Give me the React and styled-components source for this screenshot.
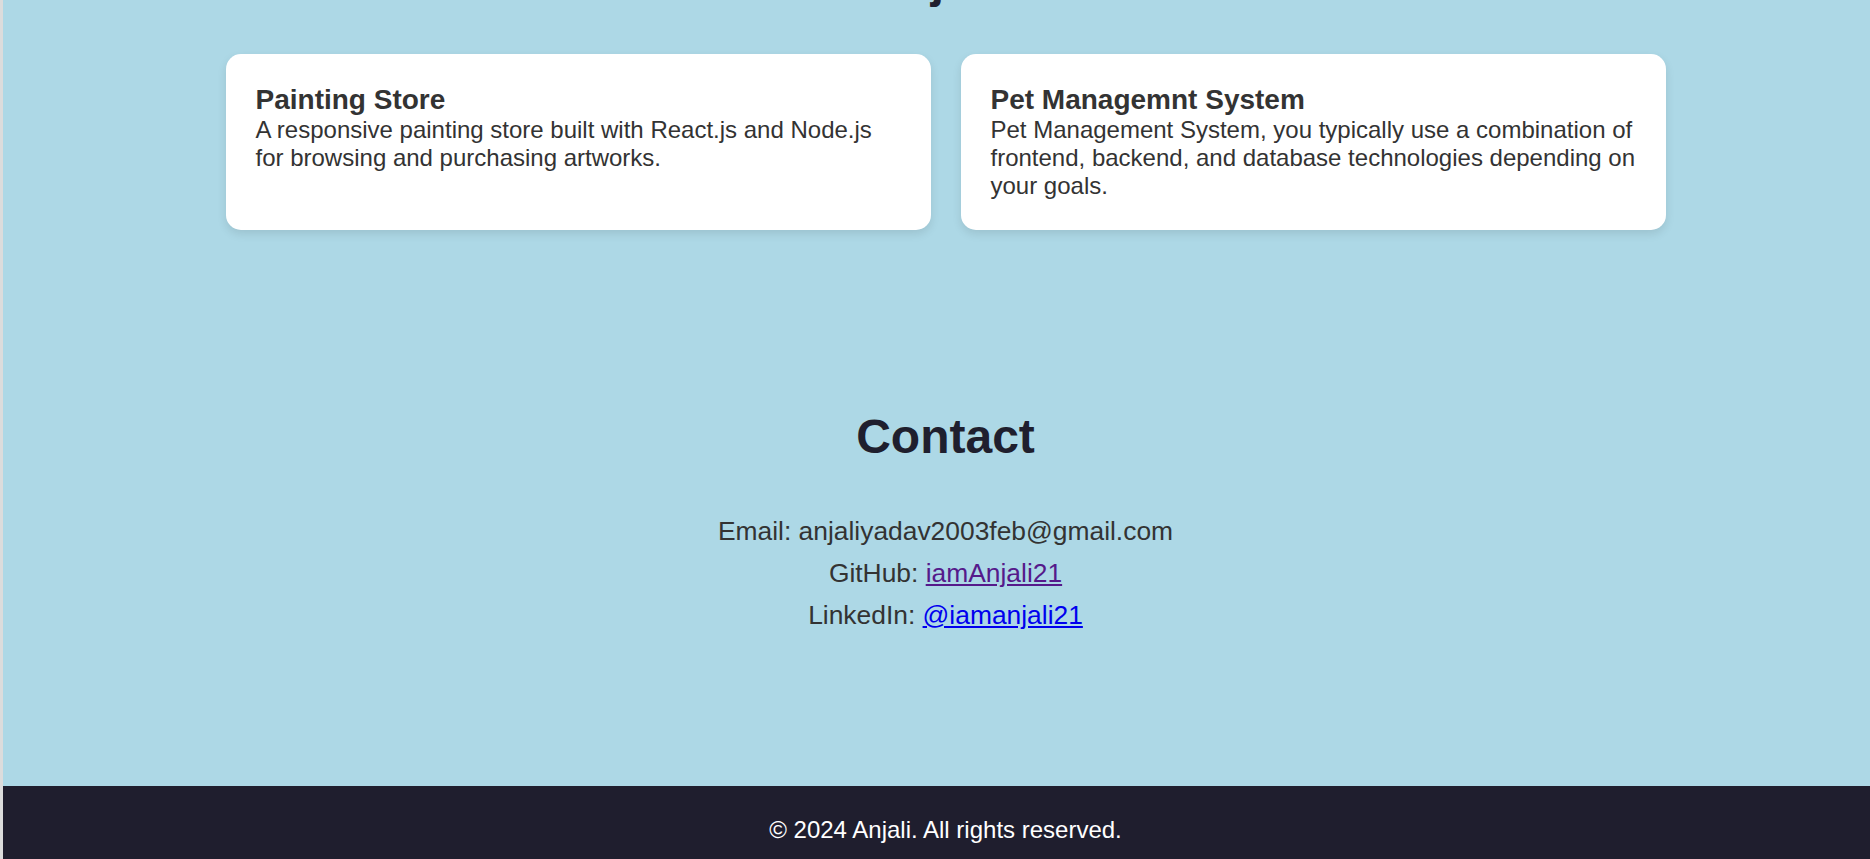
import React from "react";
import styled, { createGlobalStyle } from "styled-components";

const GlobalStyle = createGlobalStyle`
  body {
    margin: 0;
    background: #dcdcdc;
    overflow: hidden;
    font-family: "Liberation Sans", Arial, sans-serif;
  }
`;

// the page is shown scrolled: only the tail of the "Projects" heading is in view
const Page = styled.div`
  margin-left: 3px;
  margin-top: -47px;
  width: 1885px;
  background: #add8e6;
`;

const Section = styled.section`
  padding: ${(props) => props.pad || "0"};
`;

const Heading = styled.h2`
  margin: 0 0 ${(props) => props.gap || "46px"};
  text-align: center;
  font-size: 48px;
  font-weight: bold;
  color: #1f1f2e;
`;

const ProjectGrid = styled.div`
  max-width: 1440px;
  margin: 0 auto;
  display: grid;
  grid-template-columns: 1fr 1fr;
  gap: 30px;
`;

const Card = styled.div`
  background: #fff;
  border-radius: 15px;
  padding: 30px;
  box-shadow: 0 4px 10px rgba(0, 0, 0, 0.1);
`;

const CardTitle = styled.h3`
  margin: 0;
  font-size: 28px;
  color: #333;
`;

const CardText = styled.p`
  margin: 0;
  font-size: 24px;
  color: #333;
`;

const ContactLine = styled.p`
  margin: 0;
  text-align: center;
  font-size: 26.4px;
  line-height: 42px;
  color: #333;
`;

const ContactLink = styled.a`
  color: ${(props) => (props.$visited ? "#551a8b" : "#0000ee")};
  text-decoration: underline;
`;

const Footer = styled.footer`
  background: #1f1e2e;
  color: #fff;
  text-align: center;
  font-size: 24px;
  padding: 30px 0;
`;

const projects = [
  {
    title: "Painting Store",
    text: "A responsive painting store built with React.js and Node.js for browsing and purchasing artworks.",
  },
  {
    title: "Pet Managemnt System",
    text: "Pet Management System, you typically use a combination of frontend, backend, and database technologies depending on your goals.",
  },
];

function App() {
  return (
    <>
      <GlobalStyle />
      <Page>
        <Section>
          <Heading>Projects</Heading>
          <ProjectGrid>
            {projects.map((p) => (
              <Card key={p.title}>
                <CardTitle>{p.title}</CardTitle>
                <CardText>{p.text}</CardText>
              </Card>
            ))}
          </ProjectGrid>
        </Section>

        <Section pad="179px 0 150px">
          <Heading gap="46px">Contact</Heading>
          <ContactLine>Email: anjaliyadav2003feb@gmail.com</ContactLine>
          <ContactLine>
            GitHub: <ContactLink $visited href="#github">iamAnjali21</ContactLink>
          </ContactLine>
          <ContactLine>
            LinkedIn: <ContactLink href="#linkedin">@iamanjali21</ContactLink>
          </ContactLine>
        </Section>

        <Footer>© 2024 Anjali. All rights reserved.</Footer>
      </Page>
    </>
  );
}

export default App;
